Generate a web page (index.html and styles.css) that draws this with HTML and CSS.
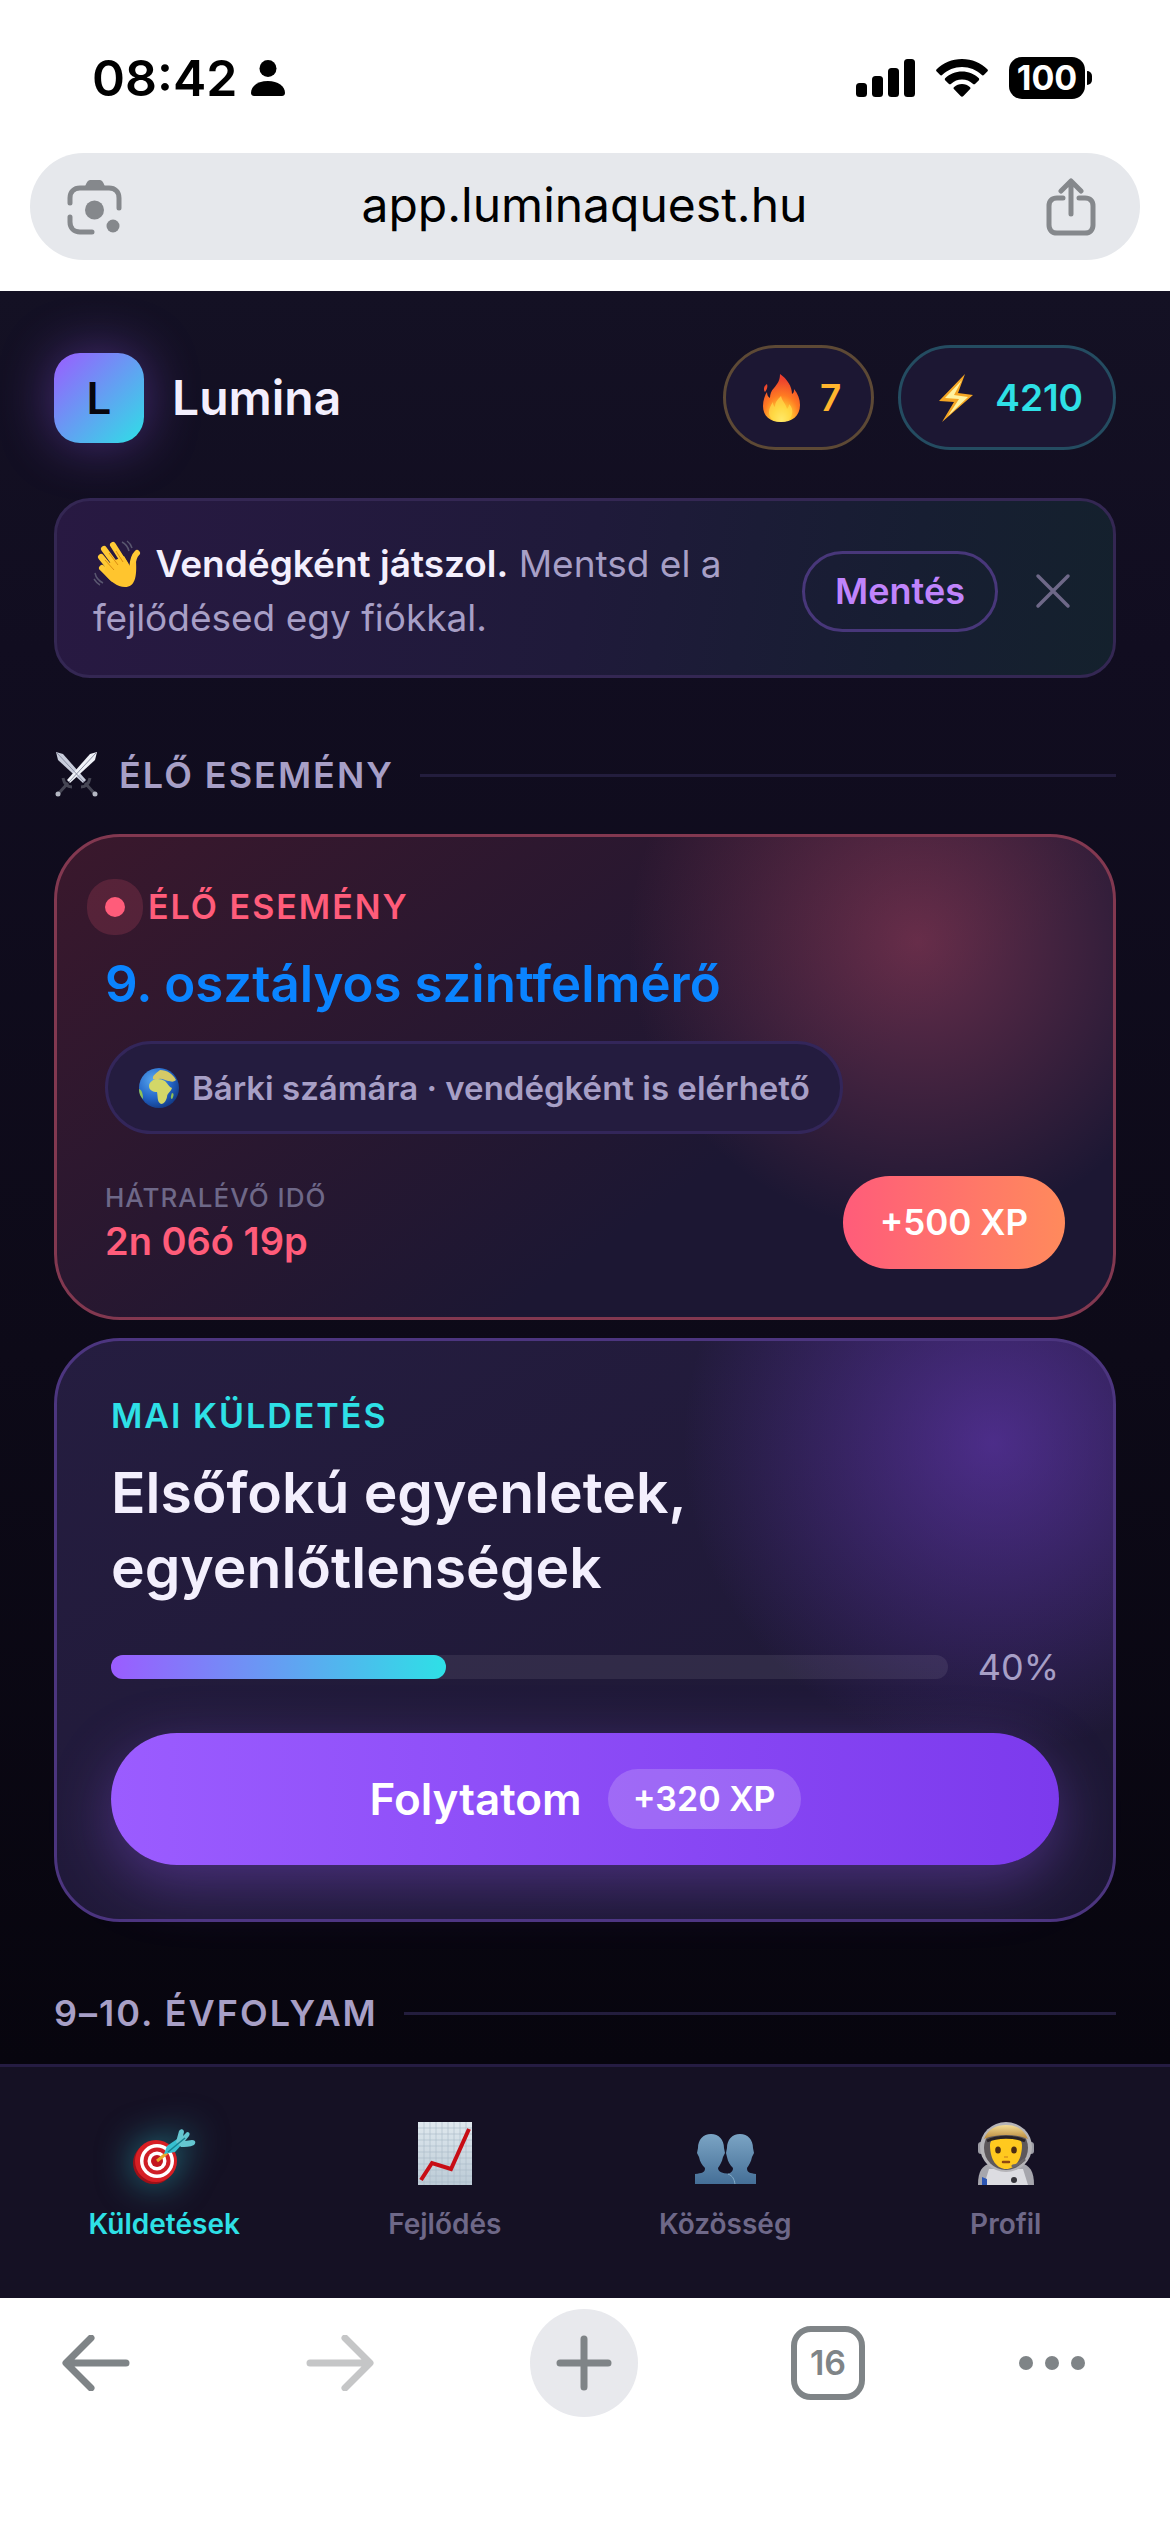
FILE: index.html
```html
<!DOCTYPE html>
<html lang="hu">
<head>
    <meta charset="UTF-8">
    <meta name="viewport" content="width=device-width, initial-scale=1.0">
    <title>Lumina</title>
    <link rel="stylesheet" href="styles.css">
</head>
<body>

<!-- Phone status bar -->
<div class="status-bar">
    <div class="status-left">
        <span class="time">08:42</span>
        <svg width="34" height="36" viewBox="0 0 34 36"><circle cx="17" cy="8.500" r="8.500"/><path d="M0 33C0 26 7 21 17 21s17 5 17 12c0 2-1.500 3-3 3H3c-1.500 0-3-1-3-3z"/></svg>
    </div>
    <div class="status-right">
        <svg width="59" height="38" viewBox="0 0 59 38"><rect y="24" width="11" height="14" rx="3.500"/><rect x="16" y="17" width="11" height="21" rx="3.500"/><rect x="32" y="9" width="11" height="29" rx="3.500"/><rect x="48" width="11" height="38" rx="3.500"/></svg>
        <svg width="52" height="38" viewBox="0 0 52 38"><path d="M26 0C16 0 7 4 .7 10.200c-.8.800-.8 1.600 0 2.400l3.200 3.200c.8.800 1.700.8 2.500 0C11.600 10.900 18.400 8 26 8s14.400 2.900 19.600 7.800c.8.800 1.700.8 2.500 0l3.200-3.200c.8-.8.800-1.600 0-2.400C45 4 36 0 26 0z"/><path d="M26 12.500c-6.500 0-12.300 2.500-16.600 6.500-.8.800-.8 1.700 0 2.500l3.300 3.200c.8.800 1.600.8 2.500 0 2.900-2.600 6.600-4.200 10.800-4.200s7.900 1.600 10.800 4.200c.9.800 1.700.8 2.500 0l3.300-3.200c.8-.8.800-1.700 0-2.500-4.300-4-10.100-6.500-16.600-6.500z"/><path d="M26 25c-3 0-5.700 1.100-7.800 2.900-.9.800-.9 1.600-.1 2.400l6.500 6.700c.9.900 1.900.9 2.800 0l6.500-6.700c.8-.8.8-1.600-.1-2.400C31.700 26.100 29 25 26 25z"/></svg>
        <div class="battery"><span class="battery-level">100</span><span class="battery-tip"></span></div>
    </div>
</div>

<!-- Address bar -->
<div class="address-row">
    <div class="address-bar">
        <button class="icon-btn" aria-label="Keresés képpel">
            <svg width="56" height="56" viewBox="0 0 56 56" fill="none" stroke="#85888c" stroke-width="5" stroke-linecap="round"><path d="M3 24v-5c0-6 4-10 10-10h29c6 0 10 4 10 10v10M3 38v5c0 6 4 10 10 10h12"/><path d="M16 11c2-1 3-10 7-10h10c4 0 5 9 7 10z" fill="#85888c" stroke="none"/><circle cx="27.500" cy="31" r="9.500" fill="#85888c" stroke="none"/><circle cx="46" cy="47" r="6.500" fill="#85888c" stroke="none"/></svg>
        </button>
        <input class="address" type="text" value="app.luminaquest.hu" aria-label="Webcím">
        <button class="icon-btn" aria-label="Megosztás">
            <svg width="50" height="58" viewBox="0 0 50 58" fill="none" stroke="#85888c" stroke-width="5" stroke-linecap="round" stroke-linejoin="round"><path d="M17 20h-6c-5 0-8 3-8 8v19c0 5 3 8 8 8h28c5 0 8-3 8-8V28c0-5-3-8-8-8h-6M25 36V4M15 13L25 3l10 10"/></svg>
        </button>
    </div>
</div>

<main class="app">
    <header class="app-header">
        <div class="brand">
            <span class="logo">L</span>
            <span class="brand-name">Lumina</span>
        </div>
        <div class="stats">
            <div class="stat stat-streak">
                <svg width="42" height="50" viewBox="0 0 42 50">
                    <defs>
                        <radialGradient id="flame" cx=".5" cy=".95" r=".85"><stop offset="0" stop-color="#fff79a"/><stop offset=".3" stop-color="#ffc933"/><stop offset=".6" stop-color="#ff7a22"/><stop offset="1" stop-color="#ec3f2e"/></radialGradient>
                    </defs>
                    <path d="M20 1c7 5 12 12 12 20 2-1 2-3 2-5 4 5 6 10 6 16 0 11-8 17-19 17S3 43 3 33c0-6 2-11 4-14 0 3 1 5 3 6 0-4 1-7 4-10 4-5 6-8 6-14zM7 11c1 3 0 5-2 8-2-3-1-6 2-8z" fill="url(#flame)"/>
                    <path d="M21 49c-8 0-12-4-12-10 0-4 2-7 4-10 0 3 1 4 2 5 0-5 3-8 6-11 1 5 5 8 6 13 1-1 2-3 2-5 3 3 4 6 3 10-1 5-5 8-11 8z" fill="#ffe14d" opacity=".65"/>
                </svg>
                <span>7</span>
            </div>
            <div class="stat stat-xp">
                <svg width="42" height="50" viewBox="0 0 42 50"><path d="M30 1L4 28l15 1L7 49l31-27-15-2z" fill="#f5a623"/><path d="M27 7L10 25l14 1-11 17 20-19-14-2z" fill="#fff3a0"/></svg>
                <span>4210</span>
            </div>
        </div>
    </header>

    <div class="guest-banner">
        <p class="guest-text">
            <svg class="wave" width="50" height="50" viewBox="0 0 50 50">
                <g stroke="#ffca35" stroke-width="6" stroke-linecap="round" fill="none"><path d="M11 9l14 19M20 5l12 19M8 17l13 16M9 28l11 11"/><path d="M44 13c-5 5-4 11-5 17"/></g>
                <path d="M14 24l17-8 6 10 6-5c1 16-1 26-11 26-8 0-15-6-21-14z" fill="#ffc52e"/>
                <path d="M16 13l9 12M23 11l7 11M12 20l9 10" stroke="#dc8d12" stroke-width="1" fill="none"/>
                <path d="M29 2c4 2 6 5 7 9M34 1c3 2 4 4 5 7M2 33c1 5 4 8 8 10M1 39c2 3 4 5 6 6" stroke="#59566f" stroke-width="1.500" fill="none"/>
            </svg>
            <strong>Vendégként játszol.</strong> Mentsd el a fejlődésed egy fiókkal.
        </p>
        <button class="save-btn">Mentés</button>
        <button class="icon-btn" aria-label="Bezárás">
            <svg width="36" height="36" viewBox="0 0 36 36" stroke="#6e6888" stroke-width="3.500" stroke-linecap="round"><path d="M3 3l30 30M33 3L3 33"/></svg>
        </button>
    </div>

    <h2 class="section-title">
        <svg width="45" height="50" viewBox="0 0 45 50">
            <path d="M2 2l7 2 23 26-3 3L4 10z" fill="#c9cddc"/><path d="M43 2l-7 2-23 26 3 3 25-23z" fill="#f0f2f8"/><path d="M3 3l27 29M42 3L15 32" stroke="#8c90a3" stroke-width="1"/>
            <path d="M27 37c5 0 8-4 9-9M18 37c-5 0-8-4-9-9M31 33l9 10M14 33L5 43" stroke="#464654" stroke-width="3" fill="none"/>
            <circle cx="41" cy="44" r="2.500" fill="#b5b8c4"/><circle cx="4" cy="44" r="2.500" fill="#b5b8c4"/>
        </svg>
        <span>ÉLŐ ESEMÉNY</span>
    </h2>

    <section class="card live-card">
        <div class="live-label"><span class="live-dot"></span>ÉLŐ ESEMÉNY</div>
        <h3 class="live-title"><a href="#">9. osztályos szintfelmérő</a></h3>
        <div class="audience">
            <svg width="42" height="42" viewBox="0 0 42 42">
                <defs><radialGradient id="ocean" cx=".35" cy=".3" r=".75"><stop offset="0" stop-color="#58a6ee"/><stop offset=".6" stop-color="#2366c8"/><stop offset="1" stop-color="#123a86"/></radialGradient></defs>
                <circle cx="21" cy="21" r="20" fill="url(#ocean)"/>
                <path d="M14 14c3-3 9-2 13 0 3 3 4 6 7 7-1 4-5 5-5 9-1 4-3 7-6 7-4-2-3-7-4-12-4 0-8-2-8-6 0-2 1-4 3-5z" fill="#d3d768"/>
                <path d="M15 12c-1-4 4-6 7-9 7 0 13 4 16 10-3 3-6 1-8 1-4-1-6-3-9-2s-4 1-6 0z" fill="#d5c966"/>
                <path d="M1 22c3 1 4 5 4 10-3-3-4-6-4-10z" fill="#8fc156"/><path d="M34 26c2 0 2 3 0 6-2 0-1-4 0-6z" fill="#8fc156"/>
            </svg>
            <span>Bárki számára · vendégként is elérhető</span>
        </div>
        <div class="live-foot">
            <div>
                <div class="time-label">HÁTRALÉVŐ IDŐ</div>
                <div class="time-left">2n 06ó 19p</div>
            </div>
            <span class="xp-badge">+500 XP</span>
        </div>
    </section>

    <section class="card quest-card">
        <div class="quest-label">MAI KÜLDETÉS</div>
        <h3 class="quest-title">Elsőfokú egyenletek, egyenlőtlenségek</h3>
        <div class="progress-row">
            <div class="progress"><div class="progress-fill" style="width: 40%"></div></div>
            <span>40%</span>
        </div>
        <button class="continue-btn">Folytatom <span class="xp-chip">+320 XP</span></button>
    </section>

    <h2 class="section-title"><span>9–10. ÉVFOLYAM</span></h2>
</main>

<!-- App navigation -->
<nav class="app-nav">
    <a class="nav-item active" href="#">
        <svg width="64" height="66" viewBox="0 0 64 66">
            <ellipse cx="22" cy="43" rx="21" ry="21" fill="#9e1018"/><circle cx="24" cy="41" r="21" fill="#d71f24"/><circle cx="25" cy="41" r="17" fill="#fff"/><circle cx="25" cy="41" r="13.500" fill="#cf1e25"/><circle cx="25" cy="41" r="9.500" fill="#fff"/><circle cx="25" cy="41" r="6" fill="#c4161e"/>
            <path d="M25 41l10-8" stroke="#e8a92c" stroke-width="3"/>
            <path d="M32 34l3-8 13-9 4 5-9 10z" fill="#37bfd0"/><path d="M44 22l3-11c2-3 5-2 5 1l-1 4 4-4c3 0 3 2 2 4l-4 5 7-1c4 0 4 3 2 5-4 2-9 2-13 2z" fill="#65c6d0"/><path d="M36 32l17-14" stroke="#18808f" stroke-width="1.500"/>
        </svg>
        <span>Küldetések</span>
    </a>
    <a class="nav-item" href="#">
        <svg width="64" height="66" viewBox="0 0 64 66">
            <defs><linearGradient id="paper" x1="0" y1="0" x2="0" y2="1"><stop offset="0" stop-color="#dfe8ee"/><stop offset="1" stop-color="#bccbd6"/></linearGradient></defs>
            <path d="M5 2h54v63H5z" fill="url(#paper)"/>
            <path d="M11 2v63M17 2v63M23 2v63M29 2v63M35 2v63M41 2v63M47 2v63M53 2v63M5 8h54M5 14h54M5 20h54M5 26h54M5 32h54M5 38h54M5 44h54M5 50h54M5 56h54M5 62h54" stroke="#a9bac8" stroke-width=".6"/>
            <path d="M8 60l11-17 19 6L56 9" stroke="#c80d15" stroke-width="4" fill="none"/>
        </svg>
        <span>Fejlődés</span>
    </a>
    <a class="nav-item" href="#">
        <svg width="64" height="66" viewBox="0 0 64 66">
            <defs><linearGradient id="bust" x1="0" y1="0" x2="0" y2="1"><stop offset="0" stop-color="#7ba4c4"/><stop offset="1" stop-color="#456f97"/></linearGradient></defs>
            <path d="M47 14c8 0 13 6 13 14l1 5-2 4c-1 5-3 8-5 11 0 5 3 5 9 6v10H29V54c7 0 11-1 11-6-3-3-5-6-6-11l-1-4 1-5c0-8 5-14 13-14z" fill="url(#bust)"/>
            <path d="M18 14c8 0 13 6 13 14l1 5-2 4c-1 5-3 8-5 11 0 4 5 5 10 6 5 2 7 5 7 10H2V54c7-1 10-1 10-6-3-3-5-6-6-11l-2-4 1-5c0-8 5-14 13-14z" fill="url(#bust)"/>
            <path d="M35 54c5 2 6 5 7 10" stroke="#86aeca" stroke-width="1" fill="none"/>
        </svg>
        <span>Közösség</span>
    </a>
    <a class="nav-item" href="#">
        <svg width="64" height="66" viewBox="0 0 64 66">
            <defs><linearGradient id="visor" x1="0" y1="0" x2="0" y2="1"><stop offset="0" stop-color="#f4dc94"/><stop offset="1" stop-color="#b9893c"/></linearGradient></defs>
            <path d="M4 65c0-14 4-20 14-22h28c10 2 14 8 14 22z" fill="#a6a6ad"/><path d="M10 65l5-16h34l5 16z" fill="#dcdce1"/>
            <rect x="4" y="22" width="8" height="12" rx="3" fill="#9c9ca4"/><rect x="52" y="22" width="8" height="12" rx="3" fill="#9c9ca4"/>
            <ellipse cx="32" cy="27" rx="26" ry="25" fill="#b5b4b8"/><circle cx="32" cy="28" r="22" fill="#5d585b"/>
            <path d="M16 25c0-6 6-9 16-9s16 3 16 9c0 15-7 24-16 24s-16-9-16-24z" fill="#ffc91f"/>
            <path d="M10 19C14 9 22 5 32 5s18 4 22 14c-7-3-14-4-22-4s-15 1-22 4z" fill="url(#visor)"/><path d="M13 21c10-5 28-5 38 0" stroke="#292326" stroke-width="3" fill="none"/>
            <ellipse cx="24" cy="30" rx="2.800" ry="3.500" fill="#4b2b13"/><ellipse cx="40" cy="30" rx="2.800" ry="3.500" fill="#4b2b13"/><path d="M29 42h6" stroke="#8f4912" stroke-width="2.500" fill="none" stroke-linecap="round"/><path d="M30 37h4" stroke="#dc941c" stroke-width="1.500"/>
            <path d="M50 40c-3 3-6 5-11 6" stroke="#6b676a" stroke-width="3" fill="none" stroke-linecap="round"/><path d="M8 57l5 2v6H8z" fill="#2b55b3"/><circle cx="40" cy="60" r="3" fill="#35343a"/>
        </svg>
        <span>Profil</span>
    </a>
</nav>

<!-- Browser toolbar -->
<div class="toolbar">
    <button class="tool-btn" aria-label="Vissza"><svg width="68" height="56" viewBox="0 0 68 56"><path d="M29 3L4 28l25 25M5 28h59" fill="none" stroke="#7f8487" stroke-width="7" stroke-linecap="round" stroke-linejoin="round"/></svg></button>
    <button class="tool-btn" aria-label="Előre"><svg width="68" height="56" viewBox="0 0 68 56"><path d="M39 3l25 25-25 25M63 28H4" fill="none" stroke="#c5c6c7" stroke-width="7" stroke-linecap="round" stroke-linejoin="round"/></svg></button>
    <button class="tool-btn new-tab" aria-label="Új lap"><svg width="56" height="56" viewBox="0 0 56 56"><path d="M28 4v48M4 28h48" stroke="#7f8487" stroke-width="7" stroke-linecap="round"/></svg></button>
    <button class="tool-btn" aria-label="Lapok"><span class="tab-count">16</span></button>
    <button class="tool-btn menu-btn" aria-label="Menü"><svg width="68" height="16" viewBox="0 0 68 16" fill="#7f8487"><circle cx="8" cy="8" r="7"/><circle cx="34" cy="8" r="7"/><circle cx="60" cy="8" r="7"/></svg></button>
</div>

</body>
</html>
```
FILE: styles.css
```css
/* General Styles */
* {
    box-sizing: border-box;
}

body {
    margin: 0;
    min-height: 100vh;
    display: flex;
    flex-direction: column;
    font-family: Inter, "Noto Sans", sans-serif;
    background-color: #ffffff;
    color: #f3effd;
}

h2, h3, p {
    margin: 0;
}

a {
    color: inherit;
    text-decoration: none;
}

button {
    font: inherit;
    color: inherit;
    border: none;
    background: none;
    padding: 0;
    cursor: pointer;
}

svg {
    display: block;
    flex-shrink: 0;
}

/* Status bar */
.status-bar {
    display: flex;
    justify-content: space-between;
    align-items: center;
    height: 153px;
    padding: 2px 78px 0 92px;
    color: #000000;
}

.status-left {
    display: flex;
    align-items: center;
    gap: 14px;
}

.time {
    font-size: 50px;
    font-weight: 600;
}

.status-right {
    display: flex;
    align-items: center;
    gap: 21px;
}

.battery {
    display: flex;
    align-items: center;
    gap: 2px;
}

.battery-level {
    width: 76px;
    height: 42px;
    border-radius: 13px;
    background-color: #000000;
    color: #ffffff;
    font-size: 34px;
    font-weight: 700;
    line-height: 42px;
    text-align: center;
}

.battery-tip {
    width: 5px;
    height: 14px;
    border-radius: 0 5px 5px 0;
    background-color: #000000;
}

/* Address bar */
.address-row {
    padding: 0 30px 31px;
}

.address-bar {
    display: flex;
    align-items: center;
    height: 107px;
    padding: 0 44px 0 37px;
    border-radius: 54px;
    background-color: #e6e8ec;
}

.address {
    flex: 1;
    min-width: 0;
    padding: 0 0 4px;
    border: none;
    outline: none;
    background: none;
    color: #000000;
    font-family: inherit;
    font-size: 48px;
    text-align: center;
}

/* App */
.app {
    padding: 54px 54px 26px;
    background: linear-gradient(#141124, #110d20 20%, #0d0a18 60%, #07050e);
}

.app-header {
    display: flex;
    justify-content: space-between;
    align-items: center;
    margin-bottom: 48px;
}

.brand {
    display: flex;
    align-items: center;
    gap: 28px;
}

.logo {
    width: 90px;
    height: 90px;
    border-radius: 26px;
    background: linear-gradient(135deg, #9b5cff, #2ee0e6);
    box-shadow: 0 0 54px rgba(155, 92, 255, 0.4);
    color: #080610;
    font-size: 44px;
    font-weight: 600;
    line-height: 90px;
    text-align: center;
}

.brand-name {
    font-size: 48px;
    font-weight: 600;
}

.stats {
    display: flex;
    gap: 24px;
}

.stat {
    display: flex;
    align-items: center;
    gap: 18px;
    height: 105px;
    padding: 0 30px 0 34px;
    border: 3px solid;
    border-radius: 53px;
    background-color: #1c1733;
    font-size: 37px;
    font-weight: 600;
}

.stat-streak {
    border-color: #5d4935;
}

.stat-streak span {
    color: #ffb52e;
}

.stat-xp {
    border-color: #244c61;
}

.stat-xp span {
    color: #2ee0e6;
}

/* Guest banner */
.guest-banner {
    display: flex;
    align-items: center;
    margin-bottom: 72px;
    padding: 36px 42px 30px 36px;
    border: 3px solid #342753;
    border-radius: 36px;
    background: linear-gradient(100deg, #281942, #1f1a3a 50%, #171e32 80%, #14212d);
}

.guest-text {
    flex: 1;
    padding-right: 60px;
    color: #a79fc6;
    font-size: 37px;
    line-height: 54px;
}

.guest-text strong {
    color: #f3effd;
    font-weight: 600;
}

.wave {
    display: inline-block;
    vertical-align: middle;
    margin: -8px 2px -4px 0;
}

.save-btn {
    height: 81px;
    margin-right: 37px;
    padding: 0 30px;
    border: 3px solid #48377a;
    border-radius: 41px;
    color: #c084fc;
    font-size: 36px;
    font-weight: 600;
}

/* Section titles */
.section-title {
    display: flex;
    align-items: center;
    gap: 20px;
    color: #a79fc6;
    font-size: 36px;
    font-weight: 600;
    line-height: 50px;
    letter-spacing: 2px;
}

.section-title::after {
    content: "";
    flex: 1;
    height: 3px;
    margin-left: 6px;
    background-color: #231d3d;
}

/* Cards */
.card {
    border: 3px solid;
    border-radius: 66px;
}

.live-card {
    margin: 34px 0 18px;
    padding: 48px;
    border-color: #823850;
    background:
        radial-gradient(circle 290px at calc(100% - 195px) 105px, rgba(255, 92, 122, 0.32), rgba(255, 92, 122, 0)),
        linear-gradient(145deg, #3a182c, #1c1733 65%);
}

.live-label {
    display: flex;
    align-items: center;
    gap: 23px;
    color: #ff5c7a;
    font-size: 34px;
    font-weight: 600;
    line-height: 44px;
    letter-spacing: 2px;
}

.live-dot {
    width: 20px;
    height: 20px;
    border-radius: 50%;
    background-color: #ff5c7a;
    box-shadow: 0 0 0 18px rgba(255, 92, 122, 0.16);
}

.live-title {
    margin: 22px 0 24px;
    color: #0a84ff;
    font-size: 51px;
    font-weight: 600;
    line-height: 66px;
}

.audience {
    display: inline-flex;
    align-items: center;
    gap: 12px;
    height: 93px;
    padding: 0 30px;
    border: 3px solid #33265a;
    border-radius: 47px;
    background-color: #241c3f;
    color: #a79fc6;
    font-size: 33px;
    font-weight: 600;
    vertical-align: top;
}

.live-foot {
    display: flex;
    justify-content: space-between;
    align-items: center;
    margin-top: 42px;
}

.time-label {
    color: #6e6888;
    font-size: 26px;
    font-weight: 500;
    line-height: 36px;
    letter-spacing: 1px;
}

.time-left {
    color: #ff5c7a;
    font-size: 38px;
    font-weight: 600;
    line-height: 50px;
}

.xp-badge {
    height: 93px;
    padding: 0 37px;
    border-radius: 47px;
    background: linear-gradient(90deg, #ff5c7a, #ff8a5c);
    color: #ffffff;
    font-size: 35px;
    font-weight: 600;
    line-height: 93px;
}

.quest-card {
    margin-bottom: 66px;
    padding: 54px;
    border-color: #4c357f;
    background:
        radial-gradient(circle 310px at calc(100% - 120px) 102px, rgba(124, 66, 224, 0.48), rgba(124, 66, 224, 0)),
        linear-gradient(150deg, #251d40, #1c1733);
}

.quest-label {
    color: #2ee0e6;
    font-size: 34px;
    font-weight: 600;
    line-height: 42px;
    letter-spacing: 2px;
}

.quest-title {
    max-width: 700px;
    margin: 18px 0 40px;
    font-size: 57px;
    font-weight: 600;
    line-height: 75px;
}

.progress-row {
    display: flex;
    align-items: center;
    gap: 30px;
    color: #a79fc6;
    font-size: 36px;
    line-height: 44px;
}

.progress {
    flex: 1;
    height: 24px;
    border-radius: 12px;
    background-color: rgba(255, 255, 255, 0.08);
}

.progress-fill {
    height: 100%;
    border-radius: 12px;
    background: linear-gradient(90deg, #9b5cff, #2ee0e6);
}

.continue-btn {
    display: flex;
    justify-content: center;
    align-items: center;
    gap: 26px;
    width: 100%;
    height: 132px;
    margin-top: 44px;
    border-radius: 66px;
    background: linear-gradient(90deg, #9b5cff, #7c3aed);
    box-shadow: 0 18px 60px rgba(155, 92, 255, 0.35);
    color: #ffffff;
    font-size: 44px;
    font-weight: 600;
}

.xp-chip {
    padding: 0 25px;
    border-radius: 30px;
    background-color: rgba(255, 255, 255, 0.18);
    font-size: 34px;
    line-height: 60px;
}

/* App navigation */
.app-nav {
    display: grid;
    grid-template-columns: repeat(4, 1fr);
    padding: 53px 24px 56px;
    border-top: 3px solid #251c42;
    background-color: #151124;
}

.nav-item {
    display: flex;
    flex-direction: column;
    align-items: center;
    gap: 20px;
    color: #6e6888;
    font-size: 28px;
    font-weight: 600;
    line-height: 36px;
}

.nav-item.active {
    color: #2ee0e6;
}

.nav-item.active svg {
    filter: drop-shadow(0 0 18px rgba(46, 224, 230, 0.5));
}

/* Browser toolbar */
.toolbar {
    flex: 1;
    display: flex;
    justify-content: space-between;
    align-items: flex-start;
    min-height: 230px;
    padding: 11px 84px 0 42px;
}

.tool-btn {
    display: flex;
    justify-content: center;
    align-items: center;
    width: 108px;
    height: 108px;
    border-radius: 50%;
}

.new-tab {
    background-color: #e8e9ed;
}

.menu-btn {
    width: 68px;
}

.tab-count {
    width: 74px;
    height: 74px;
    border: 6px solid #7f8487;
    border-radius: 20px;
    color: #7f8487;
    font-size: 34px;
    font-weight: 600;
    line-height: 62px;
}
```
